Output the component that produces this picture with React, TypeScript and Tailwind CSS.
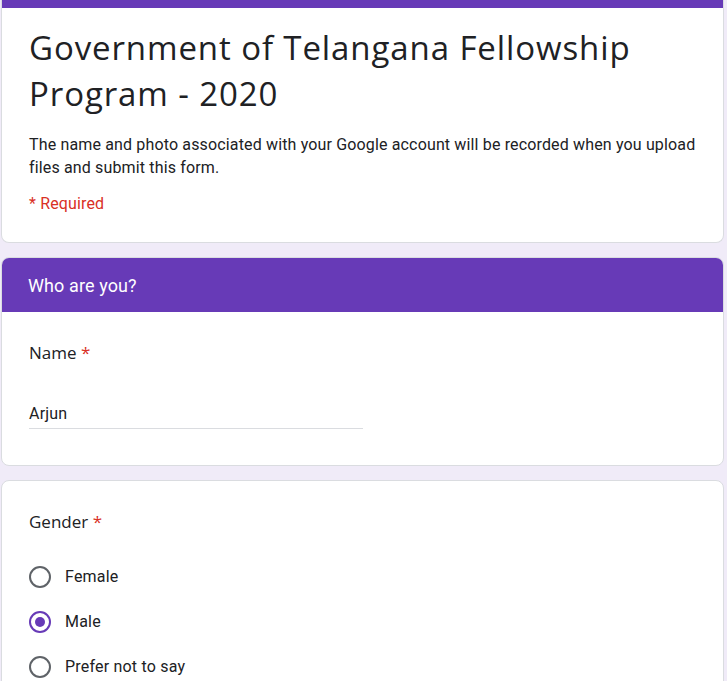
const purple = "bg-[#673ab7]";

function Radio({ label, checked }: { label: string; checked?: boolean }) {
  return (
    <div className="flex h-[45px] items-center">
      <span
        className={
          "flex h-[22px] w-[22px] items-center justify-center rounded-full border-2 " +
          (checked ? "border-[#673ab7]" : "border-[#5f6368]")
        }
      >
        {checked && <span className="h-[10px] w-[10px] rounded-full bg-[#673ab7]" />}
      </span>
      <span className="ml-[14px] text-[16px] tracking-[0.2px] text-[#202124]">{label}</span>
    </div>
  );
}

export default function App() {
  return (
    <div
      className="h-[681px] w-[727px] overflow-hidden bg-[#f0ebf8] pl-[1px]"
      style={{ fontFamily: "Roboto, 'Liberation Sans', sans-serif" }}
    >
      {/* Title card */}
      <div className="w-[723px] overflow-hidden rounded-b-lg border-x border-b border-[#dadce0] bg-white">
        <div className={"h-[8px] " + purple} />
        <div className="px-[27px] pb-[27px] pt-[17px]">
          <h1
            className="text-[33px] leading-[46px] tracking-[0.9px] text-[#202124]"
            style={{ fontFamily: "'Open Sans', Roboto, sans-serif" }}
          >
            Government of Telangana Fellowship Program - 2020
          </h1>
          <p className="mt-[16px] text-[16px] leading-[23px] tracking-[0.15px] text-[#202124]">
            The name and photo associated with your Google account will be recorded when you upload
            files and submit this form.
          </p>
          <p className="mt-[13px] text-[16px] leading-[23px] tracking-[0.15px] text-[#d93025]">
            * Required
          </p>
        </div>
      </div>

      {/* Section */}
      <div className="mt-[14px] w-[723px] overflow-hidden rounded-lg border border-[#dadce0] bg-white">
        <div className={"flex h-[54px] items-center px-[26px] " + purple}>
          <span className="text-[18px] tracking-[0.1px] text-white">Who are you?</span>
        </div>
        <div className="px-[27px] pb-[36px] pt-[30px]">
          <div
            className="text-[17px] leading-[22px] text-[#202124]"
            style={{ fontFamily: "'Open Sans', Roboto, sans-serif" }}
          >
            Name <span className="text-[#d93025]">*</span>
          </div>
          <div className="mt-[39px] w-[334px] border-b border-[#dadce0] pb-[3px] text-[16px] leading-[22px] tracking-[0.2px] text-[#202124]">
            Arjun
          </div>
        </div>
      </div>

      <div className="mt-[14px] w-[723px] rounded-lg border border-[#dadce0] bg-white">
        <div className="px-[27px] pt-[30px]">
          <div
            className="text-[17px] leading-[22px] text-[#202124]"
            style={{ fontFamily: "'Open Sans', Roboto, sans-serif" }}
          >
            Gender <span className="text-[#d93025]">*</span>
          </div>
          <div className="mt-[21px]">
            <Radio label="Female" />
            <Radio label="Male" checked />
            <Radio label="Prefer not to say" />
          </div>
        </div>
      </div>
    </div>
  );
}
